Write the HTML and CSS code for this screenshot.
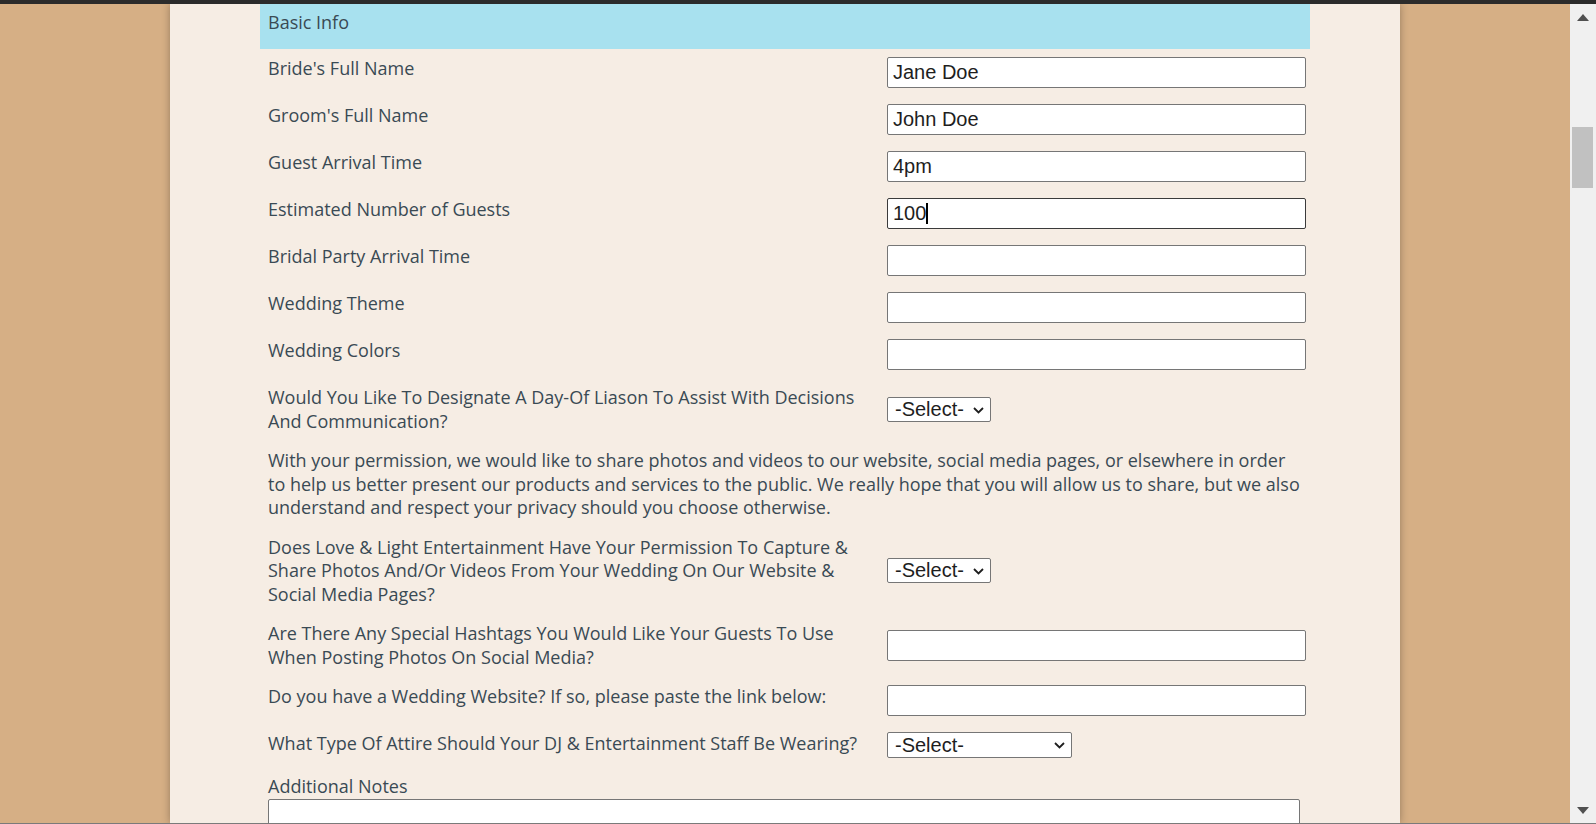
FILE: index.html
```html
<!DOCTYPE html>
<html lang="en">
<head>
<meta charset="utf-8">
<title>Wedding Planning Form</title>
<link rel="stylesheet" href="styles.css">
</head>
<body>
<div class="window">
  <div class="topbar"></div>
  <div class="viewport">
    <div class="page">
      <div class="panel">
        <div class="form">
          <div class="section-head">Basic Info</div>

          <div class="row">
            <label class="lbl">Bride's Full Name</label>
            <div class="ctl"><input class="txt" type="text" value="Jane Doe"></div>
          </div>
          <div class="row">
            <label class="lbl">Groom's Full Name</label>
            <div class="ctl"><input class="txt" type="text" value="John Doe"></div>
          </div>
          <div class="row">
            <label class="lbl">Guest Arrival Time</label>
            <div class="ctl"><input class="txt" type="text" value="4pm"></div>
          </div>
          <div class="row">
            <label class="lbl">Estimated Number of Guests</label>
            <div class="ctl focus-wrap"><input class="txt focused" type="text" value="100"><span class="caret"></span></div>
          </div>
          <div class="row">
            <label class="lbl">Bridal Party Arrival Time</label>
            <div class="ctl"><input class="txt" type="text" value=""></div>
          </div>
          <div class="row">
            <label class="lbl">Wedding Theme</label>
            <div class="ctl"><input class="txt" type="text" value=""></div>
          </div>
          <div class="row">
            <label class="lbl">Wedding Colors</label>
            <div class="ctl"><input class="txt" type="text" value=""></div>
          </div>
          <div class="row">
            <label class="lbl">Would You Like To Designate A Day-Of Liason To Assist With Decisions And Communication?</label>
            <div class="ctl">
              <span class="sel-wrap">
                <select class="sel"><option>-Select-</option><option>Yes</option><option>No</option></select>
                <svg class="chev" width="11" height="7" viewBox="0 0 11 7"><polyline points="1,1 5.5,5.5 10,1" fill="none" stroke="#1e1e1e" stroke-width="1.8"/></svg>
              </span>
            </div>
          </div>

          <p class="note">With your permission, we would like to share photos and videos to our website, social media pages, or elsewhere in order to help us better present our products and services to the public. We really hope that you will allow us to share, but we also understand and respect your privacy should you choose otherwise.</p>

          <div class="row">
            <label class="lbl">Does Love &amp; Light Entertainment Have Your Permission To Capture &amp; Share Photos And/Or Videos From Your Wedding On Our Website &amp; Social Media Pages?</label>
            <div class="ctl">
              <span class="sel-wrap">
                <select class="sel"><option>-Select-</option><option>Yes</option><option>No</option></select>
                <svg class="chev" width="11" height="7" viewBox="0 0 11 7"><polyline points="1,1 5.5,5.5 10,1" fill="none" stroke="#1e1e1e" stroke-width="1.8"/></svg>
              </span>
            </div>
          </div>
          <div class="row">
            <label class="lbl">Are There Any Special Hashtags You Would Like Your Guests To Use When Posting Photos On Social Media?</label>
            <div class="ctl"><input class="txt" type="text" value=""></div>
          </div>
          <div class="row">
            <label class="lbl">Do you have a Wedding Website? If so, please paste the link below:</label>
            <div class="ctl"><input class="txt" type="text" value=""></div>
          </div>
          <div class="row">
            <label class="lbl">What Type Of Attire Should Your DJ &amp; Entertainment Staff Be Wearing?</label>
            <div class="ctl">
              <span class="sel-wrap">
                <select class="sel sel-wide"><option>-Select-</option><option>Formal</option><option>Casual</option></select>
                <svg class="chev" width="11" height="7" viewBox="0 0 11 7"><polyline points="1,1 5.5,5.5 10,1" fill="none" stroke="#1e1e1e" stroke-width="1.8"/></svg>
              </span>
            </div>
          </div>

          <div class="notes">
            <label class="lbl notes-lbl">Additional Notes</label>
            <textarea class="ta"></textarea>
          </div>
        </div>
      </div>
    </div>
    <div class="scrollbar">
      <div class="sb-btn">
        <svg width="12" height="7" viewBox="0 0 12 7"><polygon points="0,7 6,0 12,7" fill="#505050"/></svg>
      </div>
      <div class="sb-track"><div class="sb-thumb"></div></div>
      <div class="sb-btn">
        <svg width="12" height="7" viewBox="0 0 12 7"><polygon points="0,0 12,0 6,7" fill="#505050"/></svg>
      </div>
    </div>
  </div>
</div>
</body>
</html>
```

FILE: styles.css
```css
html, body {
  margin: 0;
  padding: 0;
  height: 100%;
  overflow: hidden;
}

.window {
  height: 824px;
  display: flex;
  flex-direction: column;
  border-bottom: 1px solid #7a7a7a;
  box-sizing: border-box;
}

.topbar {
  height: 4px;
  flex: none;
  background: #2b2b2b;
}

.viewport {
  flex: 1;
  min-height: 0;
  display: flex;
}

.page {
  flex: 1;
  min-width: 0;
  background: #d6af85;
  display: flex;
  justify-content: center;
  overflow: hidden;
}

.panel {
  width: 1230px;
  flex: none;
  background: #f6ede4;
  box-shadow: 0 0 8px rgba(0, 0, 0, 0.3);
  display: flex;
  justify-content: center;
}

.form {
  width: 1050px;
  font-family: "Open Sans", "Noto Sans", sans-serif;
  font-size: 18px;
  line-height: 23.5px;
  color: #3a4a54;
}

.section-head {
  height: 45px;
  box-sizing: border-box;
  padding: 7px 8px 0;
  background: #a8e1ef;
  margin-bottom: 8px;
}

.row {
  display: grid;
  grid-template-columns: 619px 419px;
  padding-left: 8px;
  margin-bottom: 16px;
  align-items: center;
}

.lbl {
  align-self: start;
  padding-right: 8px;
}

.ctl {
  display: flex;
  align-items: center;
}

.focus-wrap {
  position: relative;
}

.txt {
  width: 419px;
  height: 31px;
  box-sizing: border-box;
  margin: 0;
  padding: 0 5px;
  border: 1px solid #767676;
  border-radius: 2px;
  background: #fff;
  font-family: "Liberation Sans", Arial, sans-serif;
  font-size: 20px;
  color: #1e1e1e;
  outline: none;
}

.txt.focused {
  border-color: #3b3b3b;
}

.caret {
  position: absolute;
  left: 39px;
  top: 5px;
  width: 2px;
  height: 21px;
  background: #000;
}

.sel-wrap {
  position: relative;
  display: inline-flex;
}

.sel {
  -webkit-appearance: none;
  appearance: none;
  width: 104px;
  height: 25px;
  box-sizing: border-box;
  margin: 0;
  padding: 0 0 0 7px;
  font-family: "Liberation Sans", Arial, sans-serif;
  font-size: 20px;
  line-height: 23px;
  color: #1e1e1e;
  background: #fff;
  border: 1px solid #767676;
  border-radius: 2px;
  outline: none;
}

.sel-wide {
  width: 185px;
  height: 26px;
}

.chev {
  position: absolute;
  right: 7px;
  top: 50%;
  margin-top: -3px;
  pointer-events: none;
}

.note {
  margin: 0 0 16px;
  padding: 0 8px;
}

.notes {
  padding-left: 8px;
  display: flex;
  flex-direction: column;
}

.notes-lbl {
  padding-top: 1px;
}

.ta {
  width: 1032px;
  height: 100px;
  box-sizing: border-box;
  margin: 0;
  border: 1px solid #767676;
  border-radius: 2px;
  background: #fff;
  resize: none;
}

.scrollbar {
  width: 26px;
  flex: none;
  background: #f0f0f0;
  display: flex;
  flex-direction: column;
}

.sb-btn {
  height: 26px;
  flex: none;
  display: flex;
  align-items: center;
  justify-content: center;
}

.sb-track {
  flex: 1;
  padding-top: 97px;
  padding-left: 2px;
}

.sb-thumb {
  width: 21px;
  height: 61px;
  background: #c1c1c1;
}
```
